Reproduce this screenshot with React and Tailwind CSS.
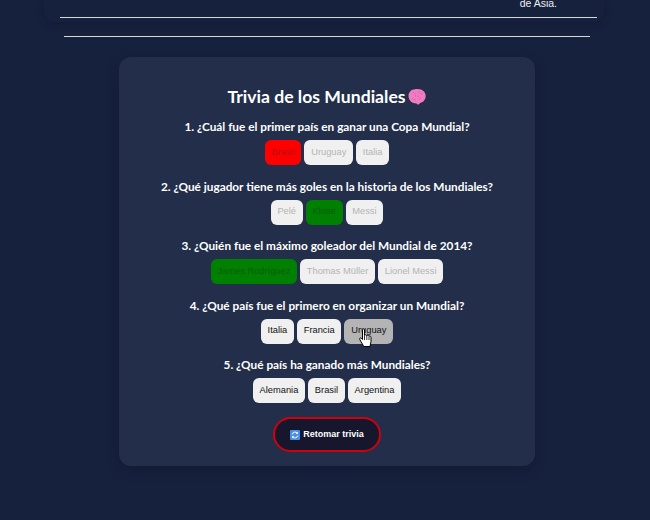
import React from 'react';

const questions = [
    { text: '1. ¿Cuál fue el primer país en ganar una Copa Mundial?', options: [['Brasil', 'wrong'], ['Uruguay', 'off'], ['Italia', 'off']] },
    { text: '2. ¿Qué jugador tiene más goles en la historia de los Mundiales?', options: [['Pelé', 'off'], ['Klose', 'right'], ['Messi', 'off']] },
    { text: '3. ¿Quién fue el máximo goleador del Mundial de 2014?', options: [['James Rodríguez', 'right'], ['Thomas Müller', 'off'], ['Lionel Messi', 'off']] },
    { text: '4. ¿Qué país fue el primero en organizar un Mundial?', options: [['Italia', 'on'], ['Francia', 'on'], ['Uruguay', 'hover']] },
    { text: '5. ¿Qué país ha ganado más Mundiales?', options: [['Alemania', 'on'], ['Brasil', 'on'], ['Argentina', 'on']] },
];

const optionStyles = {
    on: 'bg-[#f0f0f0] text-[#111111]',
    off: 'bg-[#f0f0f0] text-[#b4b4b4]',
    wrong: 'bg-[#ff0000] text-[#b80f0f]',
    right: 'bg-[#008000] text-[#0c5c0c]',
    hover: 'bg-[#b4b4b4] text-[#111111]',
};

const BrainIcon = () => (
    <svg width="20" height="18" viewBox="0 0 20 18" className="shrink-0 ml-[1px]">
        <path d="M1.500 8C1.500 4 4.500 1.200 8 1.200C11 .5 15 1 17 3.500C19.500 6.500 19 10.500 17 12.500C16 14.500 14 14.500 13 15C12 17 10 17 9.500 15.500C5 15.500 1.500 12.500 1.500 8Z" fill="#f07cc4" />
        <path d="M6 4c2 1 3 3 2 5M11 3c1 2 3 3 5 3M10 8c2 0 3 2 3 4M5 10c1 1 2 2 4 2" fill="none" stroke="#d968b0" strokeWidth="1" />
    </svg>
);

const RefreshIcon = () => (
    <svg width="10" height="10" viewBox="0 0 10 10" className="shrink-0">
        <rect width="10" height="10" rx="1" fill="#4a8fe7" />
        <path d="M2.200 4.300A3 3 0 0 1 7.500 3.300M7.800 5.700A3 3 0 0 1 2.500 6.700" fill="none" stroke="#fff" strokeWidth="1" />
        <path d="M8 1.800V4H5.800zM2 8.200V6h2.200z" fill="#fff" />
    </svg>
);

const HandCursor = () => (
    <svg width="14" height="20" viewBox="0 0 14 20" className="absolute left-[15px] top-[9px]">
        <path d="M3.500 1.800C3.500 .6 5.500 .6 5.500 1.800V7.500C6 6.500 7.500 6.500 7.800 7.800C8.300 7 9.700 7.200 10 8.300C10.500 7.700 12 8 12 9.300V13.500C12 15.500 11 16.500 11 18.500H4.500C4.200 16.500 1.500 13.500 .8 11.500C.3 10 1.700 9.300 2.700 10.500L3.500 11.500Z" fill="#fff" stroke="#000" strokeWidth="1" strokeLinejoin="round" />
        <path d="M5.500 8V12M7.800 8V12M10 8.500V12" stroke="#000" strokeWidth=".8" />
    </svg>
);

const App = () => {
    return (
        <div className="min-h-[520px] bg-[#16213e] font-['Lato',sans-serif] overflow-hidden">
            {/* End of the article above the trivia */}
            <div className="ml-[44px] w-[560px] h-[22px] pl-[16px] pr-[7px] rounded-b-xl shadow-[0_2px_10px_rgba(0,0,0,0.2)]">
                <div className="h-[18px] border-b border-[#d8d8d8] flex justify-end">
                    <span className="mr-[40px] text-[10.500px] leading-[7px] text-[#eeeeee] font-['Liberation_Sans',sans-serif]">de Asia.</span>
                </div>
            </div>
            <hr className="ml-[64px] mr-[60px] mt-[14px] border-t border-[#d8d8d8]" />

            <div className="ml-[119px] w-[416px] mt-5 pt-[29px] pb-[14px] bg-[#222e4a] rounded-xl shadow-[0_4px_14px_rgba(0,0,0,0.2)] flex flex-col items-center">
                <h2 className="flex items-center text-[17.600px] leading-[22px] font-bold text-white">
                    Trivia de los Mundiales<BrainIcon />
                </h2>

                <div className="mt-[11px] flex flex-col items-center gap-[13.500px]">
                    {questions.map((q) => (
                        <div key={q.text} className="flex flex-col items-center">
                            <p className="text-[11.800px] leading-[16px] font-bold text-white whitespace-nowrap">{q.text}</p>
                            <div className="mt-[5px] flex gap-[3px] font-['Liberation_Sans',sans-serif]">
                                {q.options.map(([label, state]) => (
                                    <div key={label} className={`relative h-[25px] px-[6.750px] flex items-center rounded-md text-[9.300px] ${optionStyles[state]}`}>
                                        {label}
                                        {state === 'hover' && <HandCursor />}
                                    </div>
                                ))}
                            </div>
                        </div>
                    ))}
                </div>

                <button className="mt-[14px] w-[108px] h-[35px] flex items-center justify-center gap-[3px] rounded-full border-2 border-[#d0000c] bg-[#16172c] text-white text-[9px] font-bold font-['Liberation_Sans',sans-serif]">
                    <RefreshIcon /> Retomar trivia
                </button>
            </div>
        </div>
    );
};

export default App;
